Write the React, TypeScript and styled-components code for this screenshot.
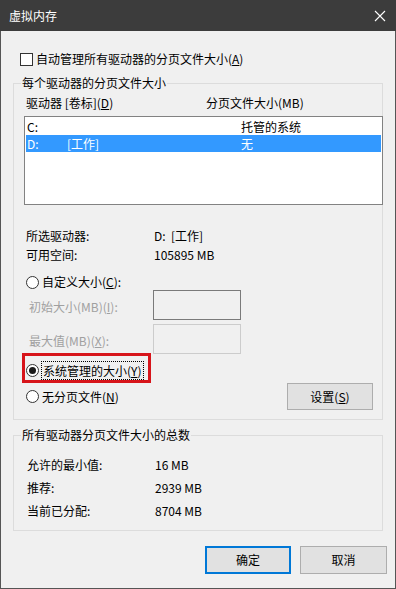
import React from 'react';
import styled, { createGlobalStyle } from 'styled-components';

const GlobalStyle = createGlobalStyle`
  html, body {
    margin: 0;
    padding: 0;
    background: #f0f0f0;
  }
  body {
    font-family: "Noto Sans CJK SC", "Noto Sans", sans-serif;
    font-size: 12px;
    color: #000;
  }
`;

const Window = styled.div`
  width: 396px;
  height: 589px;
  display: flex;
  flex-direction: column;
  background: #f0f0f0;
`;

const TitleBar = styled.div`
  height: 31px;
  flex: none;
  display: flex;
  align-items: center;
  justify-content: space-between;
  padding: 0 10px 0 9px;
  background: #3c3c3c;
  color: #fff;
  font-size: 12px;
  line-height: 16px;
`;

const CloseIcon = () => (
  <svg width="12" height="12" viewBox="0 0 12 12">
    <path d="M1 1 L11 11 M11 1 L1 11" stroke="#fff" strokeWidth="1.1" />
  </svg>
);

const Body = styled.div`
  flex: 1;
  display: flex;
  flex-direction: column;
  padding-left: 12px;
  border: 1px solid #555;
  border-top: none;
`;

const CheckRow = styled.div`
  margin-top: 20px;
  margin-left: 7px;
  height: 16px;
  display: flex;
  align-items: center;
  line-height: 16px;
`;

const CheckBox = styled.span`
  width: 13px;
  height: 13px;
  box-sizing: border-box;
  border: 1px solid #333;
  background: #fff;
  margin-right: 3px;
  flex: none;
`;

const Group = styled.div<{ $top: number; $pad: string }>`
  position: relative;
  width: 370px;
  box-sizing: border-box;
  margin-top: ${(p) => p.$top}px;
  border: 1px solid #dcdcdc;
  padding: ${(p) => p.$pad};
  display: flex;
  flex-direction: column;
`;

const Legend = styled.span`
  position: absolute;
  top: -9px;
  left: 7px;
  padding: 0 1px;
  background: #f0f0f0;
  line-height: 16px;
`;

const HeaderRow = styled.div`
  height: 18px;
  display: flex;
  align-items: center;
  line-height: 16px;
`;

const HeaderCell = styled.span<{ $w?: number }>`
  width: ${(p) => (p.$w ? `${p.$w}px` : 'auto')};
  padding-left: ${(p) => (p.$w ? '2px' : '0')};
  box-sizing: border-box;
`;

const ListBox = styled.div`
  margin-top: 4px;
  width: 359px;
  height: 89px;
  box-sizing: border-box;
  border: 1px solid #828282;
  background: #fff;
  padding: 1px;
`;

const ListRow = styled.div<{ $selected?: boolean }>`
  height: 17px;
  display: flex;
  align-items: center;
  line-height: 16px;
  background: ${(p) => (p.$selected ? '#3399ff' : 'transparent')};
  color: ${(p) => (p.$selected ? '#fff' : '#000')};
`;

const ListCell = styled.span<{ $w?: number }>`
  width: ${(p) => (p.$w ? `${p.$w}px` : 'auto')};
  flex: none;
  box-sizing: border-box;
  padding-left: 1px;
`;

const InfoBlock = styled.div<{ $top: number; $rowH: number; $pl: number; $lw: number }>`
  margin-top: ${(p) => p.$top}px;
  padding-left: ${(p) => p.$pl}px;
  display: grid;
  grid-template-columns: ${(p) => p.$lw}px auto;
  grid-auto-rows: ${(p) => p.$rowH}px;
  align-items: center;
  line-height: 16px;
`;

const RadioRow = styled.div<{ $top?: number; $h: number }>`
  margin-top: ${(p) => p.$top || 0}px;
  height: ${(p) => p.$h}px;
  padding-left: 2px;
  display: flex;
  align-items: center;
  line-height: 16px;
`;

const Radio = styled.span<{ $checked?: boolean }>`
  width: 13px;
  height: 13px;
  box-sizing: border-box;
  border: 1px solid #333;
  border-radius: 50%;
  background: #fff;
  margin-right: 3px;
  flex: none;
  display: flex;
  align-items: center;
  justify-content: center;
  &::after {
    content: '';
    width: 7px;
    height: 7px;
    border-radius: 50%;
    background: ${(p) => (p.$checked ? '#1a1a1a' : 'transparent')};
  }
`;

const FieldRow = styled.div<{ $top?: number; $h: number }>`
  margin-top: ${(p) => p.$top || 0}px;
  height: ${(p) => p.$h}px;
  display: flex;
  align-items: flex-start;
`;

const FieldLabel = styled.span`
  width: 129px;
  box-sizing: border-box;
  padding-left: 5px;
  padding-top: 9px;
  line-height: 16px;
  color: #a0a0a0;
`;

const FieldBox = styled.span<{ $dark?: boolean; $h: number }>`
  width: 88px;
  height: ${(p) => p.$h}px;
  box-sizing: border-box;
  border: 1px solid ${(p) => (p.$dark ? '#7a7a7a' : '#cccccc')};
  background: #f0f0f0;
`;

const Highlight = styled.div`
  margin-left: -2px;
  width: 129px;
  height: 30px;
  box-sizing: border-box;
  border: 3px solid #d7141a;
  padding: 5px 0 0 1px;
  display: flex;
  align-items: center;
  line-height: 16px;
`;

const FocusLabel = styled.span`
  height: 19px;
  box-sizing: border-box;
  padding: 0 1px 0 1px;
  border: 1px dotted #000;
  display: flex;
  align-items: center;
  margin-left: -1px;
`;

const SplitRow = styled.div`
  height: 27px;
  display: flex;
  align-items: center;
  justify-content: space-between;
  padding-left: 2px;
  line-height: 16px;
`;

const RadioLabel = styled.span`
  display: flex;
  align-items: center;
`;

const Button = styled.button<{ $primary?: boolean; $w: number; $h: number; $mr?: number }>`
  width: ${(p) => p.$w}px;
  height: ${(p) => p.$h}px;
  margin-right: ${(p) => p.$mr || 0}px;
  box-sizing: border-box;
  background: #e1e1e1;
  border: ${(p) => (p.$primary ? '2px solid #0078d7' : '1px solid #adadad')};
  font: inherit;
  font-size: 12px;
  line-height: 16px;
  color: #000;
  padding: 0;
`;

const ButtonRow = styled.div`
  margin-top: 15px;
  margin-right: 8px;
  display: flex;
  justify-content: flex-end;
  gap: 9px;
`;

export default function App() {
  return (
    <Window>
      <GlobalStyle />
      <TitleBar>
        <span>虚拟内存</span>
        <CloseIcon />
      </TitleBar>
      <Body>
        <CheckRow>
          <CheckBox />
          <span>
            自动管理所有驱动器的分页文件大小(<u>A</u>)
          </span>
        </CheckRow>

        <Group $top={16} $pad="10px 0 9px 10px">
          <Legend>每个驱动器的分页文件大小</Legend>
          <HeaderRow>
            <HeaderCell $w={182}>
              驱动器 [卷标](<u>D</u>)
            </HeaderCell>
            <HeaderCell>分页文件大小(MB)</HeaderCell>
          </HeaderRow>
          <ListBox>
            <ListRow>
              <ListCell $w={40}>C:</ListCell>
              <ListCell $w={174}></ListCell>
              <ListCell>托管的系统</ListCell>
            </ListRow>
            <ListRow $selected>
              <ListCell $w={40}>D:</ListCell>
              <ListCell $w={174}>[工作]</ListCell>
              <ListCell>无</ListCell>
            </ListRow>
          </ListBox>

          <InfoBlock $top={21} $rowH={19} $pl={2} $lw={128}>
            <span>所选驱动器:</span>
            <span>D:&nbsp; [工作]</span>
            <span>可用空间:</span>
            <span>105895 MB</span>
          </InfoBlock>

          <RadioRow $top={10} $h={16}>
            <Radio />
            <span>
              自定义大小(<u>C</u>):
            </span>
          </RadioRow>
          <FieldRow $h={30}>
            <FieldLabel>
              初始大小(MB)(<u>I</u>):
            </FieldLabel>
            <FieldBox $dark $h={30} />
          </FieldRow>
          <FieldRow $top={4} $h={29}>
            <FieldLabel>
              最大值(MB)(<u>X</u>):
            </FieldLabel>
            <FieldBox $h={30} />
          </FieldRow>

          <Highlight>
            <Radio $checked />
            <FocusLabel>
              系统管理的大小(<u>Y</u>)
            </FocusLabel>
          </Highlight>

          <SplitRow>
            <RadioLabel>
              <Radio />
              <span>
                无分页文件(<u>N</u>)
              </span>
            </RadioLabel>
            <Button $w={86} $h={27} $mr={9}>
              设置(<u>S</u>)
            </Button>
          </SplitRow>
        </Group>

        <Group $top={15} $pad="17px 0 8px 13px">
          <Legend>所有驱动器分页文件大小的总数</Legend>
          <InfoBlock $top={0} $rowH={23} $pl={0} $lw={128}>
            <span>允许的最小值:</span>
            <span>16 MB</span>
            <span>推荐:</span>
            <span>2939 MB</span>
            <span>当前已分配:</span>
            <span>8704 MB</span>
          </InfoBlock>
        </Group>

        <ButtonRow>
          <Button $primary $w={86} $h={28}>
            确定
          </Button>
          <Button $w={87} $h={28}>
            取消
          </Button>
        </ButtonRow>
      </Body>
    </Window>
  );
}
